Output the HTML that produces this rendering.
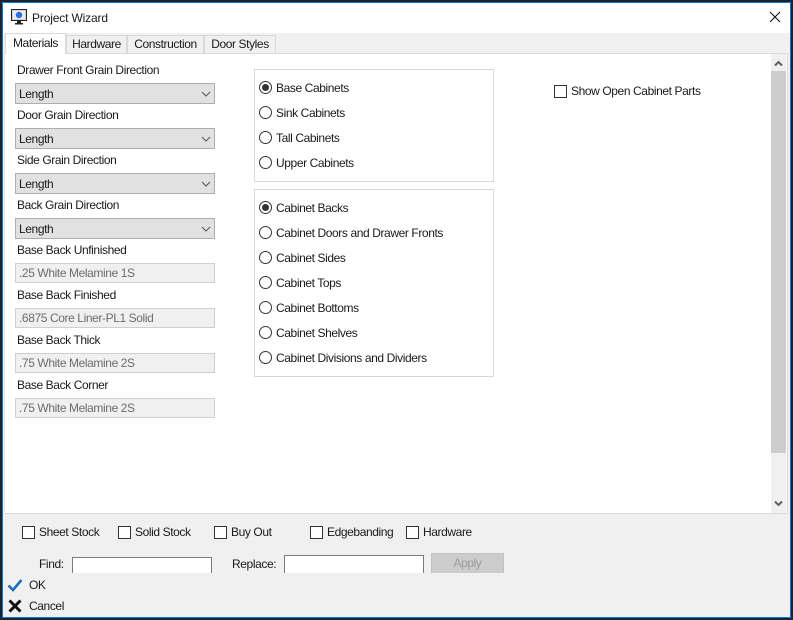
<!DOCTYPE html>
<html><head><meta charset="utf-8">
<style>
html,body{margin:0;padding:0;width:793px;height:620px;overflow:hidden;background:#1a2430}
*{box-sizing:border-box}
body{font:12px "Liberation Sans",sans-serif;letter-spacing:-0.4px;color:#1a1a1a}
#win{position:absolute;left:0;top:0;width:793px;height:620px;overflow:hidden}
.a{position:absolute}
.t{position:absolute;white-space:nowrap;line-height:14px;height:14px}
.dd{position:absolute;left:15px;width:200px;height:21px;background:#e1e1e1;border:1px solid #adadad}
.dd span{position:absolute;left:3px;top:3px;line-height:14px}
.dd svg{position:absolute;right:2px;top:6px}
.tb{position:absolute;left:15px;width:200px;height:20px;background:#f0f0f0;border:1px solid #cfcfcf;color:#6d6d6d;padding-left:3px;line-height:18px}
.tab{position:absolute;top:35px;height:18px;background:#f0f0f0;border:1px solid #d9d9d9;border-bottom:none;text-align:center;line-height:17px}
.gb{position:absolute;left:254px;width:240px;background:#fff;border:1px solid #d9d9d9}
.r{position:absolute;left:259px;width:13px;height:13px;border:1px solid #333;border-radius:50%;background:#fff}
.r.on::after{content:"";position:absolute;left:2px;top:2px;width:7px;height:7px;border-radius:50%;background:#333}
.c{position:absolute;width:13px;height:13px;border:1px solid #333;background:#fff}
</style></head><body>
<div id="win">
<div class="a" style="left:2px;top:2px;width:789px;height:616px;background:#0a78d7"></div>
<div class="a" style="left:3px;top:3px;width:787px;height:570px;background:#f0f0f0"></div>
<div class="a" style="left:3px;top:3px;width:787px;height:30px;background:#fff"></div>
<div class="a" style="left:3px;top:573px;width:787px;height:44px;background:#f0f0f0"></div>

<svg class="a" style="left:11px;top:9px" width="16" height="16" viewBox="0 0 16 16">
<rect x="0.5" y="0.5" width="15" height="11" fill="#cfd3d8" stroke="#222"/>
<rect x="2" y="2" width="12" height="8" fill="#e8ecf2"/>
<circle cx="8" cy="6" r="3.2" fill="#2f6ee0"/>
<rect x="6" y="12" width="4" height="2" fill="#222"/><rect x="4" y="14" width="8" height="1.5" fill="#222"/>
</svg>
<div class="t" style="left:32px;top:11px;letter-spacing:-0.15px">Project Wizard</div>
<svg class="a" style="left:769px;top:11px" width="12" height="12" viewBox="0 0 12 12"><path d="M1 1L11 11M11 1L1 11" stroke="#111" stroke-width="1.1" fill="none"/></svg>

<div class="a" style="left:4px;top:53px;width:784px;height:461px;background:#fff;border:1px solid #d9d9d9;border-left-color:#e8e8e8"></div>

<div class="tab" style="left:66px;width:61px">Hardware</div>
<div class="tab" style="left:127px;width:77px">Construction</div>
<div class="tab" style="left:204px;width:72px">Door Styles</div>
<div class="a" style="left:5px;top:33px;width:61px;height:21px;background:#fff;border:1px solid #d9d9d9;border-bottom:none;text-align:center;line-height:18px">Materials</div>

<div class="a" style="left:771px;top:54px;width:15px;height:459px;background:#f0f0f0"></div>
<div class="a" style="left:771px;top:71px;width:15px;height:382px;background:#cdcdcd"></div>
<svg class="a" style="left:774px;top:60px" width="9" height="7" viewBox="0 0 9 7"><path d="M1 5.5L4.5 2L8 5.5" stroke="#606060" stroke-width="2" fill="none"/></svg>
<svg class="a" style="left:774px;top:500px" width="9" height="7" viewBox="0 0 9 7"><path d="M1 1.5L4.5 5L8 1.5" stroke="#606060" stroke-width="2" fill="none"/></svg>

<div class="t" style="left:17px;top:63px">Drawer Front Grain Direction</div>
<div class="dd" style="top:83px"><span>Length</span><svg width="12" height="8" viewBox="0 0 12 8"><path d="M2 2L6 6L10 2" stroke="#555" fill="none"/></svg></div>
<div class="t" style="left:17px;top:108px">Door Grain Direction</div>
<div class="dd" style="top:128px"><span>Length</span><svg width="12" height="8" viewBox="0 0 12 8"><path d="M2 2L6 6L10 2" stroke="#555" fill="none"/></svg></div>
<div class="t" style="left:17px;top:153px">Side Grain Direction</div>
<div class="dd" style="top:173px"><span>Length</span><svg width="12" height="8" viewBox="0 0 12 8"><path d="M2 2L6 6L10 2" stroke="#555" fill="none"/></svg></div>
<div class="t" style="left:17px;top:198px">Back Grain Direction</div>
<div class="dd" style="top:218px"><span>Length</span><svg width="12" height="8" viewBox="0 0 12 8"><path d="M2 2L6 6L10 2" stroke="#555" fill="none"/></svg></div>
<div class="t" style="left:17px;top:243px">Base Back Unfinished</div>
<div class="tb" style="top:263px">.25 White Melamine 1S</div>
<div class="t" style="left:17px;top:288px">Base Back Finished</div>
<div class="tb" style="top:308px">.6875 Core Liner-PL1 Solid</div>
<div class="t" style="left:17px;top:333px">Base Back Thick</div>
<div class="tb" style="top:353px">.75 White Melamine 2S</div>
<div class="t" style="left:17px;top:378px">Base Back Corner</div>
<div class="tb" style="top:398px">.75 White Melamine 2S</div>

<div class="gb" style="top:69px;height:113px"></div>
<div class="r on" style="top:81px"></div><div class="t" style="left:276px;top:81px">Base Cabinets</div>
<div class="r" style="top:106px"></div><div class="t" style="left:276px;top:106px">Sink Cabinets</div>
<div class="r" style="top:131px"></div><div class="t" style="left:276px;top:131px">Tall Cabinets</div>
<div class="r" style="top:156px"></div><div class="t" style="left:276px;top:156px">Upper Cabinets</div>

<div class="gb" style="top:189px;height:188px"></div>
<div class="r on" style="top:201px"></div><div class="t" style="left:276px;top:201px">Cabinet Backs</div>
<div class="r" style="top:226px"></div><div class="t" style="left:276px;top:226px">Cabinet Doors and Drawer Fronts</div>
<div class="r" style="top:251px"></div><div class="t" style="left:276px;top:251px">Cabinet Sides</div>
<div class="r" style="top:276px"></div><div class="t" style="left:276px;top:276px">Cabinet Tops</div>
<div class="r" style="top:301px"></div><div class="t" style="left:276px;top:301px">Cabinet Bottoms</div>
<div class="r" style="top:326px"></div><div class="t" style="left:276px;top:326px">Cabinet Shelves</div>
<div class="r" style="top:351px"></div><div class="t" style="left:276px;top:351px">Cabinet Divisions and Dividers</div>

<div class="c" style="left:554px;top:85px"></div><div class="t" style="left:571px;top:84px">Show Open Cabinet Parts</div>

<div class="c" style="left:22px;top:526px"></div><div class="t" style="left:39px;top:525px">Sheet Stock</div>
<div class="c" style="left:118px;top:526px"></div><div class="t" style="left:135px;top:525px">Solid Stock</div>
<div class="c" style="left:214px;top:526px"></div><div class="t" style="left:231px;top:525px">Buy Out</div>
<div class="c" style="left:310px;top:526px"></div><div class="t" style="left:327px;top:525px">Edgebanding</div>
<div class="c" style="left:406px;top:526px"></div><div class="t" style="left:423px;top:525px">Hardware</div>

<div class="t" style="left:39px;top:557px">Find:</div>
<div class="a" style="left:72px;top:557px;width:140px;height:16px;background:#fff;border:1px solid #7a7a7a;border-bottom:none"></div>
<div class="t" style="left:232px;top:557px">Replace:</div>
<div class="a" style="left:284px;top:555px;width:140px;height:18px;background:#fff;border:1px solid #7a7a7a;border-bottom:none"></div>
<div class="a" style="left:431px;top:553px;width:73px;height:20px;background:#cccccc;border:1px solid #c2c2c2;border-bottom:none;text-align:center;color:#9a9a9a;line-height:19px">Apply</div>

<svg class="a" style="left:7px;top:578px" width="16" height="14" viewBox="0 0 16 14"><path d="M1.5 7.5L6 12L14.5 2" stroke="#1a6fb8" stroke-width="2.6" fill="none"/></svg>
<div class="t" style="left:29px;top:578px">OK</div>
<svg class="a" style="left:8px;top:599px" width="14" height="14" viewBox="0 0 14 14"><path d="M1.5 1.5L12.5 12.5M12.5 1.5L1.5 12.5" stroke="#111" stroke-width="3" fill="none"/></svg>
<div class="t" style="left:29px;top:599px">Cancel</div>
</div>
</body></html>
